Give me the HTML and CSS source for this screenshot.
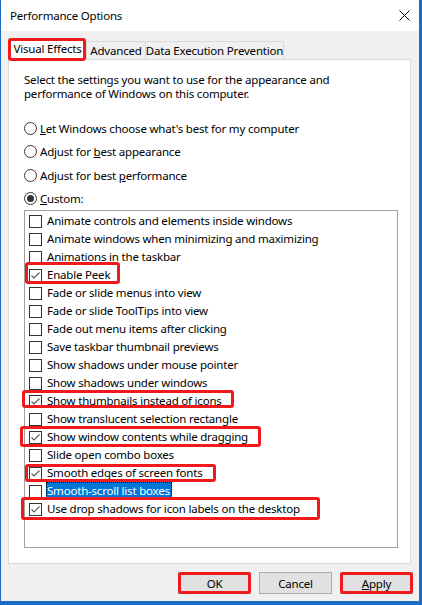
FILE: index.html
```html
<!DOCTYPE html>
<html>
<head>
<meta charset="utf-8">
<link rel="stylesheet" href="styles.css">
</head>
<body>
<div class="window">
  <div class="titlebar">
    <span class="title">Performance Options</span>
    <svg class="close" width="11" height="11" viewBox="0 0 11 11"><path d="M0.5 0.5 L10.5 10.5 M10.5 0.5 L0.5 10.5" stroke="#000" stroke-width="1" fill="none"/></svg>
  </div>
  <div class="main">
    <div class="tabs">
      <div class="tab active mark m-tab">Visual Effects</div>
      <div class="tab t-adv">Advanced</div>
      <div class="tab t-dep">Data Execution Prevention</div>
    </div>
    <div class="panel">
      <p class="intro">Select the settings you want to use for the appearance and<br>performance of Windows on this computer.</p>
      <div class="radios">
        <div class="radio"><span class="rb"></span><span><u>L</u>et Windows choose what's best for my computer</span></div>
        <div class="radio"><span class="rb"></span><span>Adjust for <u>b</u>est appearance</span></div>
        <div class="radio"><span class="rb"></span><span>Adjust for best <u>p</u>erformance</span></div>
        <div class="radio"><span class="rb on"></span><span><u>C</u>ustom:</span></div>
      </div>
      <div class="listbox">
        <div class="item"><span class="cb"></span><span class="lbl">Animate controls and elements inside windows</span></div>
        <div class="item"><span class="cb"></span><span class="lbl">Animate windows when minimizing and maximizing</span></div>
        <div class="item"><span class="cb"></span><span class="lbl">Animations in the taskbar</span></div>
        <div class="item"><span class="mark m-peek"><span class="cb"><svg viewBox="0 0 11 11" width="11" height="11"><path d="M1.5 5.5 L4 8 L9.5 2.5" stroke="#555" stroke-width="1.1" fill="none"/></svg></span><span class="lbl">Enable Peek</span></span></div>
        <div class="item"><span class="cb"></span><span class="lbl">Fade or slide menus into view</span></div>
        <div class="item"><span class="cb"></span><span class="lbl">Fade or slide ToolTips into view</span></div>
        <div class="item"><span class="cb"></span><span class="lbl">Fade out menu items after clicking</span></div>
        <div class="item"><span class="cb"></span><span class="lbl">Save taskbar thumbnail previews</span></div>
        <div class="item"><span class="cb"></span><span class="lbl">Show shadows under mouse pointer</span></div>
        <div class="item"><span class="cb"></span><span class="lbl">Show shadows under windows</span></div>
        <div class="item"><span class="mark m-thumb"><span class="cb"><svg viewBox="0 0 11 11" width="11" height="11"><path d="M1.5 5.5 L4 8 L9.5 2.5" stroke="#555" stroke-width="1.1" fill="none"/></svg></span><span class="lbl">Show thumbnails instead of icons</span></span></div>
        <div class="item"><span class="cb"></span><span class="lbl">Show translucent selection rectangle</span></div>
        <div class="item"><span class="mark m-drag"><span class="cb"><svg viewBox="0 0 11 11" width="11" height="11"><path d="M1.5 5.5 L4 8 L9.5 2.5" stroke="#555" stroke-width="1.1" fill="none"/></svg></span><span class="lbl">Show window contents while dragging</span></span></div>
        <div class="item"><span class="cb"></span><span class="lbl">Slide open combo boxes</span></div>
        <div class="item"><span class="mark m-smooth"><span class="cb"><svg viewBox="0 0 11 11" width="11" height="11"><path d="M1.5 5.5 L4 8 L9.5 2.5" stroke="#555" stroke-width="1.1" fill="none"/></svg></span><span class="lbl">Smooth edges of screen fonts</span></span></div>
        <div class="item"><span class="cb"></span><span class="lbl selected">Smooth-scroll list boxes</span></div>
        <div class="item"><span class="mark m-drop"><span class="cb"><svg viewBox="0 0 11 11" width="11" height="11"><path d="M1.5 5.5 L4 8 L9.5 2.5" stroke="#555" stroke-width="1.1" fill="none"/></svg></span><span class="lbl">Use drop shadows for icon labels on the desktop</span></span></div>
      </div>
    </div>
    <div class="buttons">
      <div class="btn mark m-btn">OK</div>
      <div class="btn">Cancel</div>
      <div class="btn mark m-btn"><span><u>A</u>pply</span></div>
    </div>
  </div>
</div>
</body>
</html>
```

FILE: styles.css
```css
html, body {
  margin: 0;
  padding: 0;
}
body {
  background: #1c6cc6;
  width: 422px;
  height: 605px;
  overflow: hidden;
  font-family: "Noto Sans", "Open Sans", sans-serif;
  font-size: 11.5px;
  letter-spacing: -0.2px;
  color: #000;
}
.window {
  margin-left: 1px;
  width: 418px;
  height: 601px;
  background: #f0f0f0;
  display: flex;
  flex-direction: column;
}
.titlebar {
  height: 31px;
  background: #fff;
  display: flex;
  align-items: center;
  justify-content: space-between;
  padding: 0 9px 0 9px;
  box-sizing: border-box;
}
.title {
  font-size: 11.5px;
  padding-bottom: 1px;
}
.close {
  display: block;
}
.main {
  padding: 6px 8px 0 7px;
  display: flex;
  flex-direction: column;
}
.tabs {
  height: 23px;
  display: flex;
  align-items: flex-end;
  position: relative;
  z-index: 2;
}
.tab {
  box-sizing: border-box;
  height: 18px;
  border: 1px solid #d9d9d9;
  border-bottom: none;
  background: #f0f0f0;
  display: flex;
  align-items: center;
  justify-content: center;
  margin-bottom: 1px;
  white-space: nowrap;
  flex: none;
}
.tab.active {
  height: 22px;
  width: 77px;
  margin-left: 1px;
  margin-bottom: 0;
  background: #fff;
  padding-bottom: 3px;
}
.t-adv {
  width: 60px;
}
.t-dep {
  width: 139px;
  margin-left: -1px;
}
.panel {
  margin-top: -1px;
  box-sizing: border-box;
  width: 403px;
  height: 505px;
  background: #fff;
  border: 1px solid #d9d9d9;
  padding: 13px 0 0 15px;
}
.intro {
  margin: 0;
  line-height: 14px;
}
.radios {
  margin-top: 16px;
  height: 93px;
  display: flex;
  flex-direction: column;
}
.radio {
  flex: 1;
  display: flex;
  align-items: center;
}
.rb {
  box-sizing: border-box;
  width: 13px;
  height: 13px;
  border: 1px solid #333;
  border-radius: 50%;
  margin-right: 3px;
  display: flex;
  align-items: center;
  justify-content: center;
}
.rb.on::before {
  content: "";
  width: 7px;
  height: 7px;
  border-radius: 50%;
  background: #333;
}
.listbox {
  box-sizing: border-box;
  width: 374px;
  height: 338px;
  border: 1px solid #a0a0a0;
  padding-top: 1px;
}
.item {
  height: 18px;
  display: flex;
  align-items: center;
  padding-left: 4px;
}
.cb {
  box-sizing: border-box;
  width: 13px;
  height: 13px;
  border: 1px solid #333;
  background: #fff;
  margin-right: 4px;
  flex: none;
}
.cb svg {
  display: block;
}
.lbl {
  padding: 0 2px 0 1px;
  white-space: nowrap;
  height: 18px;
  line-height: 18px;
  box-sizing: border-box;
}
.lbl.selected {
  background: #0078d7;
  color: #fff;
  border: 1px dotted #000;
  line-height: 16px;
  padding: 0 1px 0 0;
}
.mark {
  position: relative;
  display: inline-flex;
  align-items: center;
}
.item .mark {
  height: 18px;
}
.mark::after {
  content: "";
  position: absolute;
  border: 3px solid #f01a1c;
  border-radius: 3px;
  pointer-events: none;
}
.m-tab::after {
  top: -1px;
  bottom: -1px;
  left: -2px;
  right: -1px;
}
.m-peek::after {
  top: -4px;
  bottom: 0;
  left: -4px;
  right: -8px;
}
.m-thumb::after {
  top: -2px;
  bottom: 2px;
  left: -7px;
  right: -10px;
}
.m-drag::after {
  top: -2px;
  bottom: -1px;
  left: -9px;
  right: -11px;
}
.m-smooth::after {
  top: 0;
  bottom: 0;
  left: -4px;
  right: -12px;
}
.m-drop::after {
  top: -3px;
  bottom: -2px;
  left: -8px;
  right: -18px;
}
.buttons {
  margin-top: 8px;
  margin-right: -2px;
  display: flex;
  justify-content: flex-end;
  gap: 8px;
}
.btn {
  box-sizing: border-box;
  width: 73px;
  height: 22px;
  background: #e1e1e1;
  border: 1px solid #adadad;
  display: flex;
  align-items: center;
  justify-content: center;
}
.m-btn::after {
  top: -1px;
  bottom: -1px;
  left: -1px;
  right: -1px;
}
```
